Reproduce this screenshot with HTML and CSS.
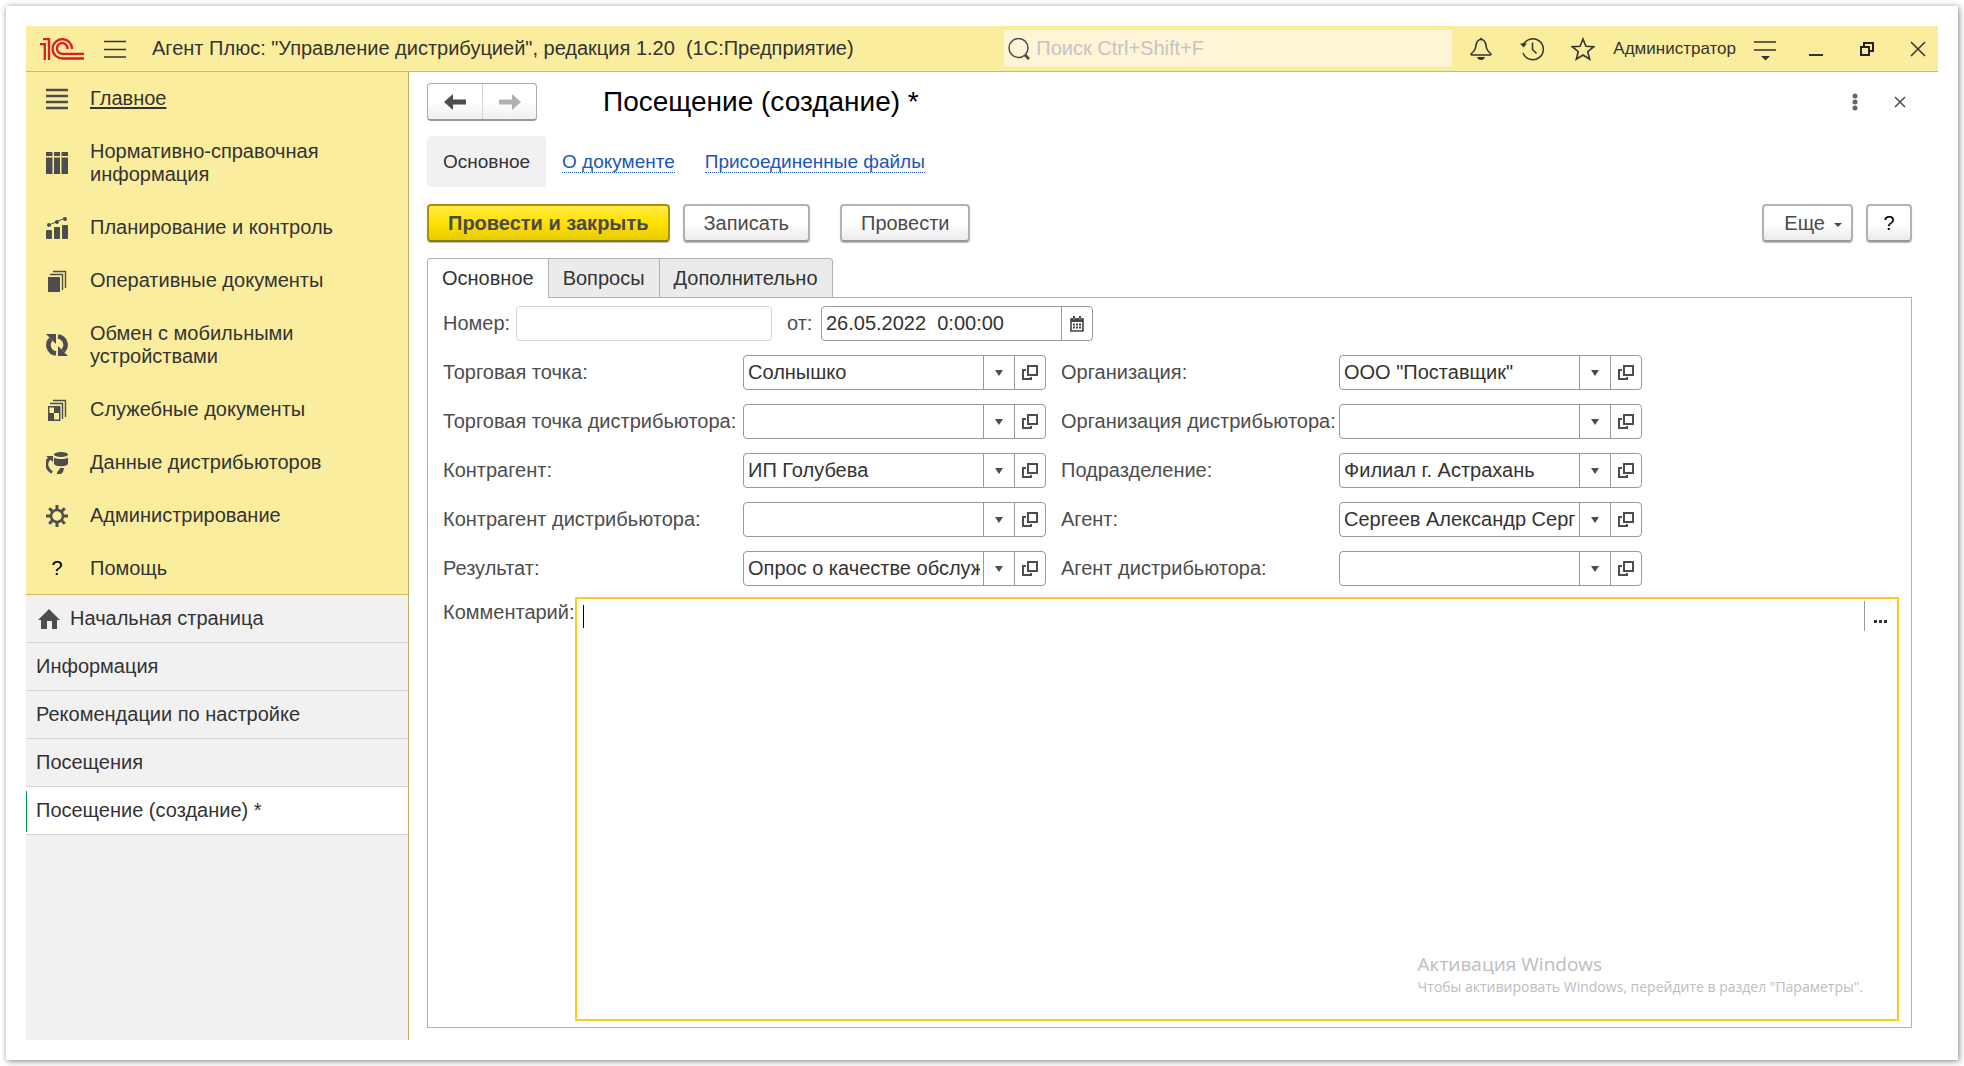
FILE: index.html
```html
<!DOCTYPE html>
<html lang="ru">
<head>
<meta charset="utf-8">
<title>Посещение (создание)</title>
<meta name="viewport" content="width=device-width, initial-scale=1">
<link rel="stylesheet" href="styles.css">
</head>
<body>
<svg class="sprite" aria-hidden="true">
  <symbol id="i-open" viewBox="0 0 16 16"><path d="M6 1h9v9H6zM4 5H1v9h8v-2" fill="none" stroke="currentColor" stroke-width="2"/></symbol>
  <symbol id="i-down" viewBox="0 0 8 6"><path d="M0 0h8L4 6z" fill="currentColor"/></symbol>
</svg>
<div class="frame">
  <div class="app">
    <header class="topbar">
      <svg class="logo" viewBox="0 0 44 22" aria-label="1С" role="img"><g fill="none" stroke="#e01b22" stroke-width="2.300"><path d="M0 6.200h4.800V22M3 1.200h6V22"/><path d="M32 11A9.700 9.700 0 1 0 22.500 20.500H44"/><path d="M27.500 11A5.300 5.300 0 1 0 22.500 15.800H44"/></g></svg>
      <button class="icon-btn menu" aria-label="Меню"><svg width="22" height="18" viewBox="0 0 22 18"><path d="M0 1.500h22M0 9.500h22M0 17h22" stroke="#333" stroke-width="1.500"/></svg></button>
      <h1 class="app-title">Агент Плюс: "Управление дистрибуцией", редакция 1.20&nbsp; (1С:Предприятие)</h1>
      <label class="search">
        <svg width="22" height="22" viewBox="0 0 22 22"><circle cx="10.500" cy="10" r="9.500" fill="none" stroke="#4d4d4d" stroke-width="1.500"/><path d="M17 17l4 4" stroke="#4d4d4d" stroke-width="3"/></svg>
        <input type="search" placeholder="Поиск Ctrl+Shift+F">
      </label>
      <div class="tools">
        <button class="icon-btn" aria-label="Уведомления"><svg width="24" height="24" viewBox="0 0 24 24"><path d="M12 2.500c-3 0-4.500 2.500-5 6-.5 4-2 6-4.500 8-.8.800-.5 1.500.5 1.500h18c1 0 1.300-.7.500-1.500-2.500-2-4-4-4.500-8-.5-3.500-2-6-5-6z" fill="none" stroke="#333" stroke-width="1.600"/><path d="M10 2.500l2-2 2 2zM8 20h8c-.5 2-2 3-4 3s-3.500-1-4-3z" fill="#333"/></svg></button>
        <button class="icon-btn" aria-label="История"><svg width="24" height="24" viewBox="0 0 24 24"><path d="M3 8.500A10.500 10.500 0 1 1 3 16" fill="none" stroke="#333" stroke-width="1.500"/><path d="M0 6.500h7L3.500 10.500zM1 7.500l3-2 1.500 2z" fill="#333"/><path d="M12.500 5.500v7l4 4" fill="none" stroke="#333" stroke-width="1.500"/></svg></button>
        <button class="icon-btn" aria-label="Избранное"><svg width="24" height="24" viewBox="0 0 24 24"><path d="M12 2l2.900 7.200 7.800.5-6 5 2 7.500-6.700-4.200-6.700 4.200 2-7.500-6-5 7.800-.5z" fill="none" stroke="#333" stroke-width="1.600"/></svg></button>
        <a class="user" href="#">Администратор</a>
        <button class="icon-btn" aria-label="Настройки"><svg width="22" height="24" viewBox="0 0 22 24"><path d="M0 5h22M0 13h22" stroke="#333" stroke-width="1.500"/><path d="M7 19h9l-4.500 4.500z" fill="#333"/></svg></button>
      </div>
      <div class="win">
        <button class="icon-btn" aria-label="Свернуть"><svg width="16" height="16" viewBox="0 0 16 16"><path d="M1 14h14" stroke="#333" stroke-width="2"/></svg></button>
        <button class="icon-btn" aria-label="Восстановить"><svg width="16" height="16" viewBox="0 0 16 16"><path d="M2 6h8v8H2zM5 6V2h9v8h-4" fill="none" stroke="#222" stroke-width="2"/></svg></button>
        <button class="icon-btn" aria-label="Закрыть"><svg width="16" height="16" viewBox="0 0 16 16"><path d="M1 1l14 14M15 1L1 15" stroke="#333" stroke-width="1.500"/></svg></button>
      </div>
    </header>
    <div class="body">
      <aside class="sidebar">
        <nav class="sections">
          <a class="current" href="#"><svg viewBox="0 0 22 22"><path d="M0 2h22M0 8h22M0 14h22M0 20h22" stroke="#4d4d4d" stroke-width="2.600"/></svg><span>Главное</span></a>
          <a href="#"><svg viewBox="0 0 22 22"><path d="M0 0h6.500v4H0zM8 0h6v4H8zM15.500 0H22v4h-6.500zM0 5.500h6.500V22H0zM8 5.500h6V22H8zM15.500 5.500H22V22h-6.500z" fill="#4d4d4d"/></svg><span>Нормативно-справочная информация</span></a>
          <a href="#"><svg viewBox="0 0 22 22"><rect y="13" width="6" height="9" rx="1" fill="#4d4d4d"/><rect x="8" y="10" width="6" height="12" rx="1" fill="#4d4d4d"/><rect x="16" y="8" width="6" height="14" rx="1" fill="#4d4d4d"/><path d="M3 8l7-3 9-4" stroke="#4d4d4d" fill="none"/><g fill="#4d4d4d"><circle cx="3" cy="8" r="2"/><circle cx="11" cy="5" r="2"/><circle cx="19" cy="2" r="2"/></g></svg><span>Планирование и контроль</span></a>
          <a href="#"><svg viewBox="0 0 22 22"><path d="M2 7h12v15H2z" fill="#4d4d4d"/><path d="M4 4.500h12.500V20M7 1.500h12.500V18" fill="none" stroke="#4d4d4d" stroke-width="1.400"/></svg><span>Оперативные документы</span></a>
          <a href="#"><svg viewBox="0 0 22 22"><path d="M10 19.500A8.500 8.500 0 0 1 5 5M12 2.500a8.500 8.500 0 0 1 5 14.500" fill="none" stroke="#4d4d4d" stroke-width="4.600"/><path d="M0 0h10v10zM22 22h-10v-10z" fill="#4d4d4d"/></svg><span>Обмен с мобильными устройствами</span></a>
          <a href="#"><svg viewBox="0 0 22 22"><path d="M2.700 7.700h11v13.600h-11z" fill="none" stroke="#4d4d4d" stroke-width="1.400"/><path d="M8 8h6v6H8zM3 14h5v7H3z" fill="#4d4d4d"/><path d="M4 4.500h12.500V20M7 1.500h12.500V18" fill="none" stroke="#4d4d4d" stroke-width="1.400"/></svg><span>Служебные документы</span></a>
          <a href="#"><svg viewBox="0 0 22 22"><path d="M6 20.500C-1 16-.5 9 4 6" fill="none" stroke="#4d4d4d" stroke-width="3"/><path d="M0 4h7v6zM11 22c0-3 2-3 3-6h4c-.5 3-1 4-3 6z" fill="#4d4d4d"/><ellipse cx="15" cy="2.500" rx="7" ry="2.500" fill="#4d4d4d"/><path d="M8 5.500c3 2 11 2 14 0V12c-2 3-12 3-14 0z" fill="#4d4d4d"/></svg><span>Данные дистрибьюторов</span></a>
          <a href="#"><svg viewBox="0 0 22 22"><circle cx="11" cy="11" r="6" fill="none" stroke="#4d4d4d" stroke-width="2.500"/><path d="M11 0v4M11 18v4M0 11h4M18 11h4M3.200 3.200l3 3M15.800 15.800l3 3M3.200 18.800l3-3M15.800 6.200l3-3" stroke="#4d4d4d" stroke-width="3"/></svg><span>Администрирование</span></a>
          <a href="#"><b class="q">?</b><span>Помощь</span></a>
        </nav>
        <nav class="windows">
          <a href="#"><svg width="22" height="20" viewBox="0 0 22 20"><path d="M11 0l11 11h-3v9h-5v-8H9v8H3v-9H0z" fill="#4d4d4d"/></svg>Начальная страница</a>
          <a href="#">Информация</a>
          <a href="#">Рекомендации по настройке</a>
          <a href="#">Посещения</a>
          <a class="active" href="#">Посещение (создание) *</a>
        </nav>
      </aside>
      <main class="doc">
        <div class="doc-head">
          <div class="history">
            <button aria-label="Назад"><svg width="22" height="16" viewBox="0 0 22 16"><path d="M0 8l9-8v5.500h13v5H9V16z" fill="#4d4d4d"/></svg></button>
            <button aria-label="Вперед"><svg width="22" height="16" viewBox="0 0 22 16"><path d="M22 8l-9-8v5.500H0v5h13V16z" fill="#b0b0b0"/></svg></button>
          </div>
          <h2>Посещение (создание) *</h2>
          <button class="icon-btn" aria-label="Действия"><svg width="6" height="18" viewBox="0 0 6 18"><g fill="#666"><circle cx="3" cy="3" r="2.500"/><circle cx="3" cy="9" r="2.500"/><circle cx="3" cy="15" r="2.500"/></g></svg></button>
          <button class="icon-btn close" aria-label="Закрыть форму"><svg width="12" height="12" viewBox="0 0 12 12"><path d="M1 1l10 10M11 1L1 11" stroke="#4d4d4d" stroke-width="1.500"/></svg></button>
        </div>
        <nav class="links">
          <span class="here">Основное</span>
          <a href="#">О документе</a>
          <a href="#">Присоединенные файлы</a>
        </nav>
        <div class="commands">
          <button class="btn primary">Провести и закрыть</button>
          <button class="btn">Записать</button>
          <button class="btn post">Провести</button>
          <button class="btn more">Еще <svg width="8" height="4" viewBox="0 0 8 4"><path d="M0 0h8L4 4z" fill="currentColor"/></svg></button>
          <button class="btn help">?</button>
        </div>
        <div class="tabs" role="tablist">
          <button role="tab" aria-selected="true">Основное</button>
          <button role="tab" aria-selected="false">Вопросы</button>
          <button role="tab" aria-selected="false">Дополнительно</button>
        </div>
        <form class="panel">
          <div class="line">
            <label for="num">Номер:</label>
            <div class="field num"><input id="num" type="text"></div>
            <label class="from" for="date">от:</label>
            <div class="field date"><input id="date" type="text" value="26.05.2022  0:00:00"><button type="button" aria-label="Календарь"><svg width="14" height="16" viewBox="0 0 14 16"><path d="M1 3h12v12H1z" fill="none" stroke="#444" stroke-width="1.600"/><path d="M1 2.500h2v1.500h2V2.500h4v1.500h2V2.500h2V6H1zM3 0h2v2H3zM9 0h2v2H9z" fill="#444"/><path d="M3 8.500h8M3 11.500h8" stroke="#444" stroke-width="2" stroke-dasharray="2 1"/></svg></button></div>
          </div>
          <div class="grid">
            <label for="f1">Торговая точка:</label>
            <div class="field"><input id="f1" type="text" value="Солнышко"><button type="button" aria-label="Выбрать"><svg width="8" height="6"><use href="#i-down"/></svg></button><button type="button" aria-label="Открыть"><svg width="16" height="16"><use href="#i-open"/></svg></button></div>
            <label for="f2">Организация:</label>
            <div class="field"><input id="f2" type="text" value="ООО &quot;Поставщик&quot;"><button type="button" aria-label="Выбрать"><svg width="8" height="6"><use href="#i-down"/></svg></button><button type="button" aria-label="Открыть"><svg width="16" height="16"><use href="#i-open"/></svg></button></div>
            <label for="f3">Торговая точка дистрибьютора:</label>
            <div class="field"><input id="f3" type="text"><button type="button" aria-label="Выбрать"><svg width="8" height="6"><use href="#i-down"/></svg></button><button type="button" aria-label="Открыть"><svg width="16" height="16"><use href="#i-open"/></svg></button></div>
            <label for="f4">Организация дистрибьютора:</label>
            <div class="field"><input id="f4" type="text"><button type="button" aria-label="Выбрать"><svg width="8" height="6"><use href="#i-down"/></svg></button><button type="button" aria-label="Открыть"><svg width="16" height="16"><use href="#i-open"/></svg></button></div>
            <label for="f5">Контрагент:</label>
            <div class="field"><input id="f5" type="text" value="ИП Голубева"><button type="button" aria-label="Выбрать"><svg width="8" height="6"><use href="#i-down"/></svg></button><button type="button" aria-label="Открыть"><svg width="16" height="16"><use href="#i-open"/></svg></button></div>
            <label for="f6">Подразделение:</label>
            <div class="field"><input id="f6" type="text" value="Филиал г. Астрахань"><button type="button" aria-label="Выбрать"><svg width="8" height="6"><use href="#i-down"/></svg></button><button type="button" aria-label="Открыть"><svg width="16" height="16"><use href="#i-open"/></svg></button></div>
            <label for="f7">Контрагент дистрибьютора:</label>
            <div class="field"><input id="f7" type="text"><button type="button" aria-label="Выбрать"><svg width="8" height="6"><use href="#i-down"/></svg></button><button type="button" aria-label="Открыть"><svg width="16" height="16"><use href="#i-open"/></svg></button></div>
            <label for="f8">Агент:</label>
            <div class="field"><input id="f8" type="text" value="Сергеев Александр Сергеевич"><button type="button" aria-label="Выбрать"><svg width="8" height="6"><use href="#i-down"/></svg></button><button type="button" aria-label="Открыть"><svg width="16" height="16"><use href="#i-open"/></svg></button></div>
            <label for="f9">Результат:</label>
            <div class="field"><input id="f9" type="text" value="Опрос о качестве обслуживания"><button type="button" aria-label="Выбрать"><svg width="8" height="6"><use href="#i-down"/></svg></button><button type="button" aria-label="Открыть"><svg width="16" height="16"><use href="#i-open"/></svg></button></div>
            <label for="f10">Агент дистрибьютора:</label>
            <div class="field"><input id="f10" type="text"><button type="button" aria-label="Выбрать"><svg width="8" height="6"><use href="#i-down"/></svg></button><button type="button" aria-label="Открыть"><svg width="16" height="16"><use href="#i-open"/></svg></button></div>
          </div>
          <div class="comment">
            <label for="note">Комментарий:</label>
            <div class="note">
              <textarea id="note"></textarea>
              <button type="button" aria-label="Редактировать"><svg width="14" height="3" viewBox="0 0 14 3"><path d="M0 0h3v3H0zM5 0h3v3H5zM10 0h3v3h-3z" fill="#333"/></svg></button>
              <span class="caret"></span>
              <div class="watermark"><p class="wm-title">Активация Windows</p><p>Чтобы активировать Windows, перейдите в раздел "Параметры".</p></div>
            </div>
          </div>
        </form>
      </main>
    </div>
  </div>
</div>
</body>
</html>
```
FILE: styles.css
```css
* { box-sizing: border-box; }

body {
  margin: 0;
  padding: 6px;
  background: #fff;
  color: #333;
  font: 20px/23px "Liberation Sans", Arial, sans-serif;
}

button, input, textarea {
  margin: 0;
  padding: 0;
  border: 0;
  background: none;
  color: inherit;
  font: inherit;
}

input, textarea { min-width: 0; outline: 0; }
svg { display: block; flex: none; }
a { color: inherit; text-decoration: none; }
h1, h2, p { margin: 0; font-weight: normal; }
.sprite { position: absolute; width: 0; height: 0; }

.frame {
  display: flex;
  min-height: calc(100vh - 12px);
  padding: 20px;
  box-shadow: 1px 1px 6px rgba(0, 0, 0, .5);
}

.app { display: flex; flex: 1; flex-direction: column; min-width: 0; }
.icon-btn { display: flex; align-items: center; justify-content: center; flex: none; }

/* Title bar */
.topbar {
  display: flex;
  align-items: center;
  height: 46px;
  padding: 0 12px 0 14px;
  border-bottom: 1px solid #cdbb63;
  background: #fbed9e;
}
.logo { width: 44px; height: 22px; }
.menu { margin: 0 26px 0 20px; }
.app-title { flex: 1; font-size: 20px; white-space: nowrap; }
.search {
  display: flex;
  align-items: center;
  gap: 6px;
  width: 448px;
  height: 37px;
  padding: 0 4px;
  border-radius: 2px;
  background: #fdf5d5;
}
.search input { flex: 1; }
.search input::placeholder { color: #c4c4c8; opacity: 1; }
.tools { display: flex; align-items: center; gap: 27px; padding-left: 17px; }
.user { margin: 0 -9px; font-size: 17px; }
.win { display: flex; gap: 35px; padding-left: 32px; }

.body { display: flex; flex: 1; }

/* Navigation */
.sidebar {
  flex: none;
  width: 383px;
  border-right: 1px solid #b9b05f;
  background: #f1f1f1;
}
.sections { border-bottom: 1px solid #cdbb63; background: #fbed9e; }
.sections a {
  display: flex;
  align-items: center;
  gap: 22px;
  padding: 15px 60px 15px 20px;
}
.sections a:last-child { padding-bottom: 14px; }
.sections svg { width: 22px; height: 22px; }
.q { width: 22px; color: #000; font-weight: normal; text-align: center; }
.current span { text-decoration: underline; text-underline-offset: 2px; }
.windows a {
  display: flex;
  align-items: center;
  gap: 10px;
  height: 48px;
  padding: 0 10px;
  border-bottom: 1px solid #d6d6d6;
}
.windows svg { margin-left: 2px; }
.windows .active {
  background: linear-gradient(#009646, #009646) 0 4px / 1px 41px no-repeat #fff;
}

/* Document */
.doc {
  display: flex;
  flex: 1;
  flex-direction: column;
  min-width: 0;
  padding: 11px 26px 12px 18px;
}
.doc-head { display: flex; align-items: center; height: 38px; }
.doc-head h2 { flex: 1; margin-left: 66px; color: #000; font-size: 28px; line-height: 36px; }
.doc-head .close { margin: 0 6px 0 36px; }
.history {
  display: flex;
  height: 38px;
  border: 1px solid #aaa;
  border-bottom: 2px solid #999;
  border-radius: 4px;
  background: linear-gradient(#fff 50%, #efefef);
}
.history button { display: flex; align-items: center; justify-content: center; width: 54px; }
.history button + button { border-left: 1px solid #d4d4d4; }

.links { display: flex; align-items: center; gap: 30px; margin-top: 15px; font-size: 19px; }
.here {
  margin-right: -14px;
  padding: 14px 16px;
  border-radius: 4px;
  background: #f1f1f1;
}
.links a { padding-top: 2px; border-bottom: 1px dotted #1b57b5; color: #1b57b5; line-height: 20px; }

.commands { display: flex; gap: 13px; margin-top: 17px; }
.btn {
  display: flex;
  align-items: center;
  justify-content: center;
  height: 38px;
  padding: 0 19px;
  border: 2px solid #b2b2b2;
  border-bottom-color: #999;
  border-radius: 4px;
  background: linear-gradient(#fff 50%, #ebebeb);
  box-shadow: 0 1px 1px #bbb;
  color: #4a4a4a;
}
.primary {
  border-color: #a89200;
  border-bottom-color: #8a7a00;
  background: linear-gradient(#ffec45, #ffe000 50%, #e6cc00);
  font-weight: bold;
}
.post { margin-left: 17px; }
.more { gap: 9px; margin-left: auto; padding: 0 9px 0 20px; }
.more svg { margin-top: 3px; }
.help { width: 46px; padding: 0; color: #000; }

.tabs { display: flex; margin-top: 16px; }
.tabs button {
  height: 39px;
  padding: 0 14px;
  border: 1px solid #b2b2b2;
  border-width: 1px 1px 0 0;
  background: #ebebeb;
}
.tabs button:first-child { border-left-width: 1px; border-radius: 4px 0 0 0; }
.tabs button:last-child { border-radius: 0 4px 0 0; }
.tabs [aria-selected="true"] { z-index: 1; height: 40px; margin-bottom: -1px; background: #fff; }

.panel {
  display: flex;
  flex: 1;
  flex-direction: column;
  padding: 8px 12px 6px 15px;
  border: 1px solid #b2b2b2;
  color: #4d4d4d;
}
.line { display: flex; align-items: center; }
.line label { width: 73px; }
.line .from { width: 34px; margin-left: 15px; }
.field {
  display: flex;
  width: 303px;
  height: 35px;
  border: 1px solid #999;
  border-radius: 4px;
  background: #fff;
  color: #333;
}
.field input { flex: 1; margin: 0 3px 0 4px; white-space: pre; }
.field button {
  display: flex;
  align-items: center;
  justify-content: center;
  width: 31px;
  border-left: 1px solid #999;
  color: #4d4d4d;
}
.num { width: 256px; border-color: #d4d4d4; }
.date { width: 272px; }
.grid {
  display: grid;
  grid-template-columns: 300px 303px 293px 303px;
  align-items: center;
  row-gap: 14px;
  margin-top: 14px;
}
.grid label { white-space: nowrap; }
.grid label:nth-of-type(even) { margin-left: 15px; }

.comment { display: flex; flex: 1; margin-top: 11px; }
.comment label { flex: none; width: 132px; padding-top: 4px; }
.note {
  position: relative;
  display: flex;
  flex: 1;
  align-items: flex-start;
  border: 2px solid #fccb1e;
}
.note textarea { flex: 1; align-self: stretch; padding: 6px; resize: none; color: #333; }
.note button {
  display: flex;
  align-items: flex-end;
  justify-content: center;
  width: 33px;
  height: 30px;
  margin-top: 2px;
  padding-bottom: 8px;
  border-left: 1px solid #999;
}
.caret { position: absolute; top: 6px; left: 6px; width: 1px; height: 23px; background: #000; }
.watermark {
  position: absolute;
  right: 34px;
  bottom: 22px;
  color: #bdbdbd;
  font: 14px/20px "Open Sans", "Noto Sans", sans-serif;
  pointer-events: none;
}
.wm-title { font-size: 19px; line-height: 26px; }
```
